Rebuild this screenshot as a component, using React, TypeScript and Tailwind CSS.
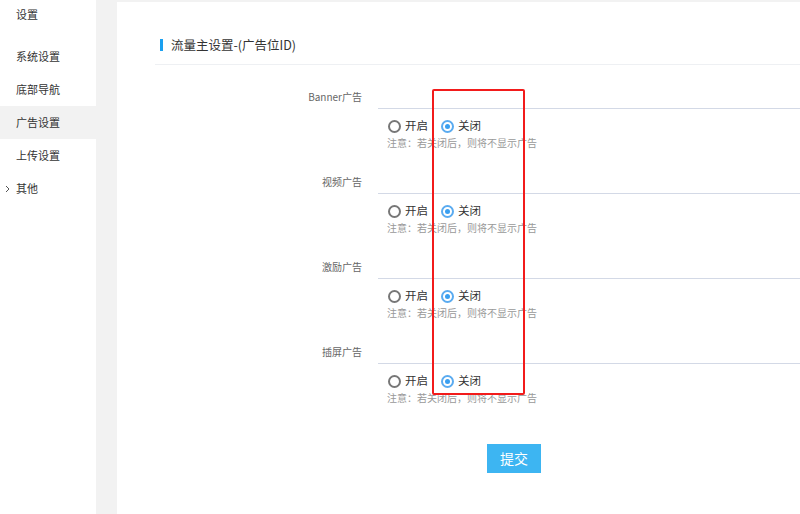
import React from "react";

const menu = ["系统设置", "底部导航", "广告设置", "上传设置"];
const blocks = ["Banner广告", "视频广告", "激励广告", "插屏广告"];

const Radio = ({ checked, label }: { checked: boolean; label: string }) => (
  <div className="flex items-center">
    <span
      className={`w-[13px] h-[13px] rounded-full border-2 flex items-center justify-center ${
        checked ? "border-[#5aabf0]" : "border-[#777]"
      }`}
    >
      {checked && <span className="w-[5px] h-[5px] rounded-full bg-[#3a9ff0]" />}
    </span>
    <span className="ml-[4px] text-[11.5px] text-[#333]">{label}</span>
  </div>
);

const App = () => {
  return (
    <div className="relative flex w-[800px] h-[514px] overflow-hidden bg-[#f2f2f2] font-['Noto_Sans_CJK_SC',sans-serif]">
      {/* Sidebar */}
      <div className="w-[96px] h-full bg-white shrink-0">
        <div className="h-[40px] pl-[16px] pt-[4px] leading-[20px] text-[11px] text-[#333]">设置</div>
        {menu.map((m) => (
          <div
            key={m}
            className={`h-[33px] leading-[33px] pl-[16px] text-[11px] text-[#333] ${
              m === "广告设置" ? "bg-[#f2f2f2]" : ""
            }`}
          >
            {m}
          </div>
        ))}
        <div className="h-[33px] flex items-center pl-[5px] text-[11px] text-[#333]">
          <svg width="6" height="8" viewBox="0 0 6 8" className="mr-[5px]">
            <path d="M1 1l3 3-3 3" fill="none" stroke="#555" strokeWidth="1" />
          </svg>
          其他
        </div>
      </div>

      {/* Panel */}
      <div className="ml-[21px] mt-[2px] flex-1 bg-white pl-[38px]">
        <div className="pt-[33px] pb-[9px] pl-[5px] border-b border-[#eef0f3] flex items-center">
          <span className="w-[3px] h-[12px] bg-[#1aa0f0] mr-[8px]" />
          <span className="leading-[20px] text-[12.5px] text-[#333]">流量主设置-(广告位ID)</span>
        </div>

        <div className="mt-[20px]">
          {blocks.map((b) => (
            <div key={b} className="flex mb-[20px]">
              <div className="w-[223px] pr-[16px] text-right h-[24px] leading-[24px] text-[10px] text-[#666]">
                {b}
              </div>
              <div className="flex-1">
                <div className="h-[24px] border-b border-[#d3d9e6]" />
                <div className="mt-[8px] h-[18px] ml-[10px] flex items-center gap-[13px]">
                  <Radio checked={false} label="开启" />
                  <Radio checked={true} label="关闭" />
                </div>
                <div className="mt-[1px] ml-[9px] leading-[14px] text-[10px] text-[#999]">
                  注意：若关闭后，则将不显示广告
                </div>
              </div>
            </div>
          ))}
        </div>

        <button className="mt-[19px] ml-[332px] w-[54px] h-[29px] bg-[#3db5f2] text-white text-[14px] leading-[29px]">
          提交
        </button>
      </div>

      {/* Annotation box */}
      <div className="absolute left-[432px] top-[89px] w-[93px] h-[306px] border-2 border-[#f21b1b] rounded-[2px]" />
    </div>
  );
};

export default App;
